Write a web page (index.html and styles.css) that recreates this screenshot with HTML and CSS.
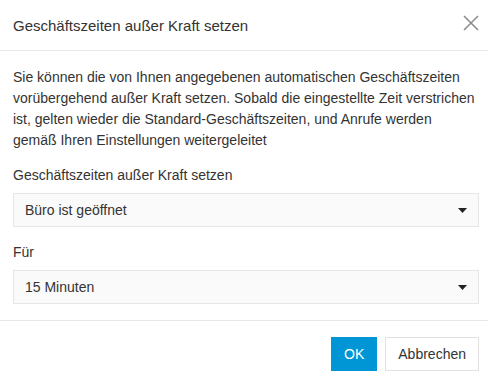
FILE: index.html
```html
<!DOCTYPE html>
<html lang="de">
<head>
  <meta charset="UTF-8">
  <title>Geschäftszeiten außer Kraft setzen</title>
  <link rel="stylesheet" href="styles.css">
</head>
<body>

<div class="dialog">
  <div class="dialog-header">
    <h2 class="dialog-title">Geschäftszeiten außer Kraft setzen</h2>
    <span class="close-btn">
      <svg width="16" height="16" viewBox="0 0 16 16"><path d="M1 1 L15 15 M15 1 L1 15" stroke="#8a8a8a" stroke-width="1.5" fill="none"/></svg>
    </span>
  </div>

  <div class="dialog-body">
    <p class="intro">Sie können die von Ihnen angegebenen automatischen Geschäftszeiten vorübergehend außer Kraft setzen. Sobald die eingestellte Zeit verstrichen ist, gelten wieder die Standard-Geschäftszeiten, und Anrufe werden gemäß Ihren Einstellungen weitergeleitet</p>

    <label class="field-label">Geschäftszeiten außer Kraft setzen</label>
    <div class="select-box">
      <span>Büro ist geöffnet</span>
      <svg class="caret" width="9" height="5" viewBox="0 0 9 5"><path d="M0 0 H9 L4.5 5 Z" fill="#222"/></svg>
    </div>

    <label class="field-label">Für</label>
    <div class="select-box">
      <span>15 Minuten</span>
      <svg class="caret" width="9" height="5" viewBox="0 0 9 5"><path d="M0 0 H9 L4.5 5 Z" fill="#222"/></svg>
    </div>
  </div>

  <div class="dialog-footer">
    <button class="btn btn-primary">OK</button>
    <button class="btn btn-default">Abbrechen</button>
  </div>
</div>

</body>
</html>
```

FILE: styles.css
```css
body { margin: 0; background: #fff; font-family: "Liberation Sans", Arial, sans-serif; color: #333; }

.dialog { width: 488px; }

.dialog-header {
  display: flex; align-items: center; justify-content: space-between;
  height: 50px; padding: 0 9px 0 13px; border-bottom: 1px solid #e8e8e8;
}
.dialog-title { margin: 0; font-size: 15px; font-weight: normal; color: #333; }
.close-btn { display: flex; width: 16px; height: 16px; margin-top: -4px; }

.dialog-body { padding: 16px 9px 16px 13px; border-bottom: 1px solid #e8e8e8; }
.intro { margin: 0 0 14px; font-size: 14px; line-height: 21px; }

.field-label { display: block; font-size: 14px; line-height: 21px; margin-bottom: 7px; }

.select-box {
  display: flex; align-items: center; justify-content: space-between;
  height: 32px; padding: 0 11px 0 11px;
  background: #fafafa; border: 1px solid #e6e6e6;
  font-size: 14px; margin-bottom: 15px;
}
.select-box:last-child { margin-bottom: 0; }

.dialog-footer { display: flex; justify-content: flex-end; gap: 8px; padding: 16px 9px 12px 13px; }

.btn { height: 34px; font-family: inherit; font-size: 14px; padding: 0 13px; cursor: pointer; }
.btn-primary { background: #0096d6; color: #fff; border: none; }
.btn-default { background: #fff; color: #333; border: 1px solid #e2e2e2; padding: 0 12px; }
```
